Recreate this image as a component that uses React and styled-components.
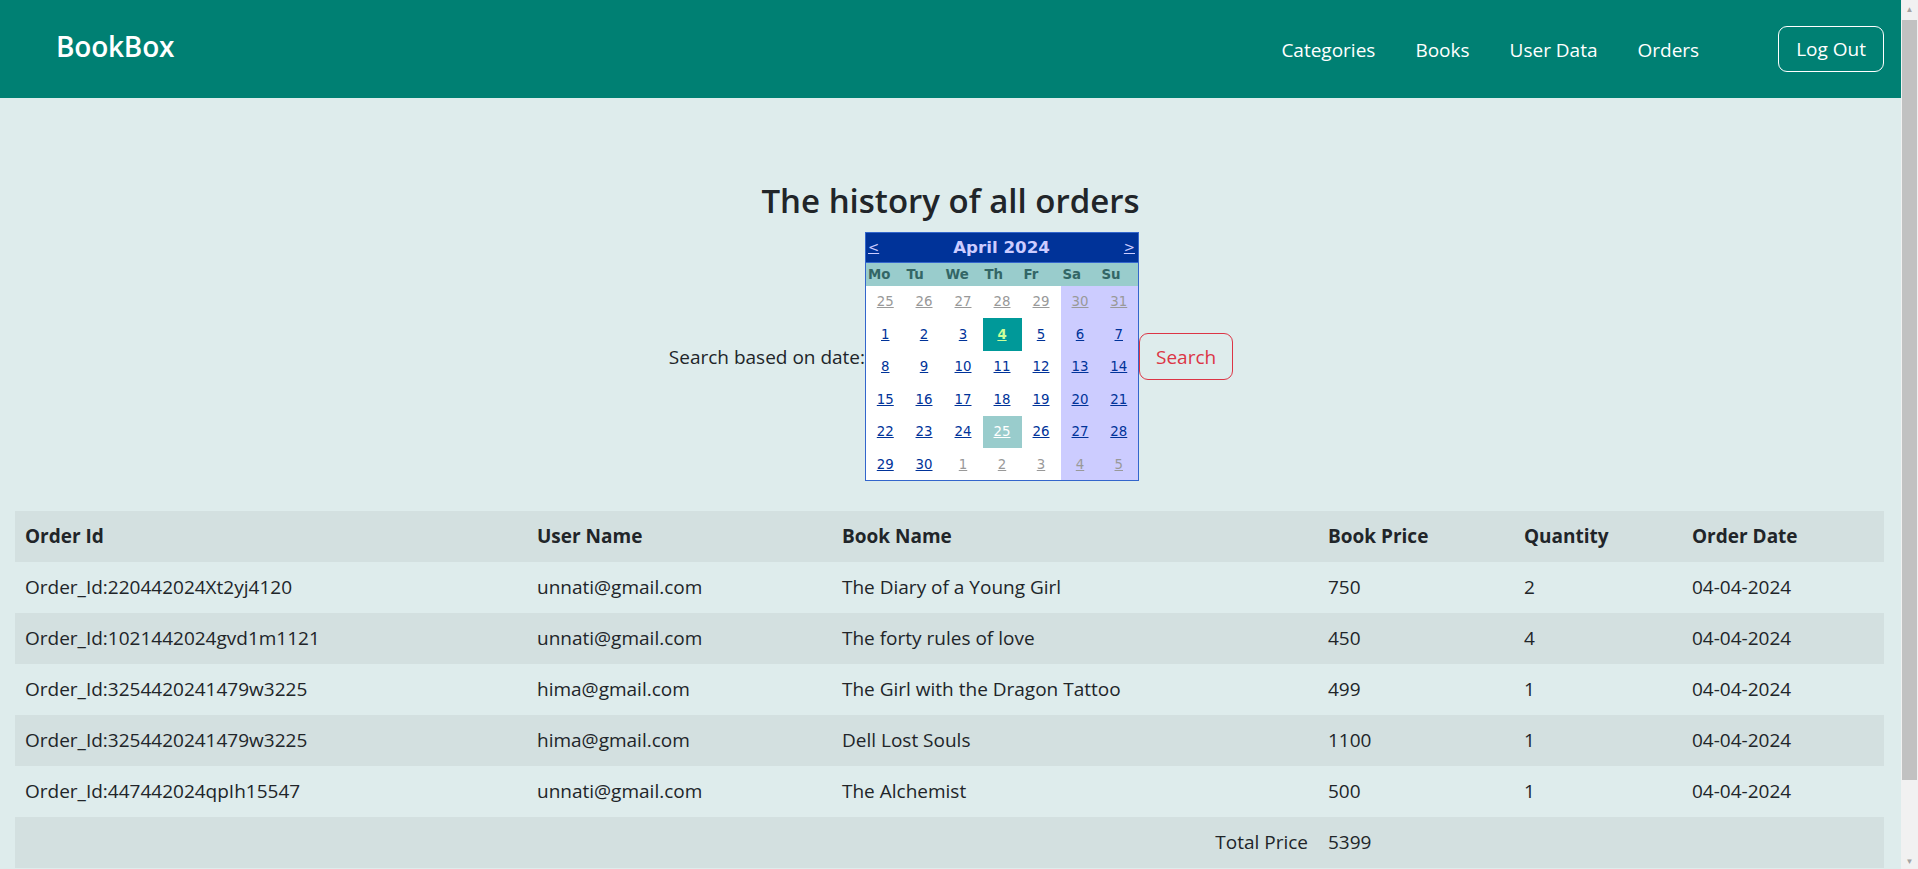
import React from "react";
import styled, { createGlobalStyle } from "styled-components";

const GlobalStyle = createGlobalStyle`
  html, body { margin: 0; padding: 0; }
  body {
    font-family: "Open Sans", "Noto Sans", sans-serif;
    background: #deecec;
    color: #212529;
  }
  * { box-sizing: border-box; }
`;

const Page = styled.div`
  margin-right: 17px;
`;

const ScrollTrack = styled.div`
  position: fixed;
  top: 0;
  right: 0;
  width: 17px;
  height: 100vh;
  background: #f1f1f1;
  display: flex;
  flex-direction: column;
  align-items: center;
`;

const ScrollArrow = styled.div`
  height: 17px;
  width: 17px;
  display: flex;
  align-items: center;
  justify-content: center;
  color: #a3a3a3;
  font-size: 8px;
  line-height: 1;
`;

const ScrollThumb = styled.div`
  width: 15px;
  height: 760px;
  margin-top: 3px;
  background: #c1c1c1;
`;

const ScrollSpacer = styled.div`
  flex: 1;
`;

const Navbar = styled.header`
  display: flex;
  align-items: center;
  height: 98px;
  background: #008073;
  padding: 0 17px 0 56px;
`;

const Brand = styled.a`
  font-size: 28px;
  font-weight: 600;
  color: #fff;
  text-decoration: none;
  margin-bottom: 6px;
  letter-spacing: -0.2px;
`;

const NavLinks = styled.nav`
  margin-left: auto;
  display: flex;
  align-items: center;
  gap: 40px;
  padding-top: 2px;
`;

const NavLink = styled.a`
  color: #fff;
  font-size: 19px;
  line-height: 30px;
  text-decoration: none;
  cursor: pointer;
`;

const OutlineButton = styled.button`
  font-family: inherit;
  font-size: 19px;
  line-height: 30px;
  background: transparent;
  border: 1px solid ${(p) => p.$color};
  color: ${(p) => p.$color};
  border-radius: 9px;
  height: ${(p) => p.$height}px;
  padding: 0 ${(p) => p.$padX}px;
  cursor: pointer;
`;

const LogOutButton = styled(OutlineButton)`
  margin-left: 79px;
`;

const Main = styled.main`
  padding: 82px 15px 79px 15px;
`;

const Title = styled.h3`
  margin: 0 0 10px;
  text-align: center;
  font-size: 33px;
  line-height: 42px;
  font-weight: 600;
`;

const SearchRow = styled.div`
  display: flex;
  justify-content: center;
  align-items: center;
  padding-left: 1px;
`;

const SearchLabel = styled.label`
  font-size: 19px;
  line-height: 30px;
`;

const CalTable = styled.table`
  border-collapse: collapse;
  table-layout: fixed;
  width: 274px;
  background: #fff;
  border: 1px solid #3366cc;
  font-family: "DejaVu Sans", Verdana, sans-serif;
  font-size: 13.33px;
  color: #003399;
`;

const CalTitleCell = styled.td`
  background: #003399;
  border: 1px solid #3366cc;
  height: 30px;
  padding: 0 3px 0 2px;
  color: #ccccff;
`;

const CalTitleBar = styled.div`
  display: flex;
  align-items: center;
  justify-content: space-between;
`;

const MonthLabel = styled.span`
  font-size: 16.67px;
  font-weight: bold;
`;

const CalArrow = styled.a`
  color: #ccccff;
  text-decoration: underline;
  font-size: 13.33px;
  cursor: pointer;
`;

const DayHeader = styled.th`
  background: #99cccc;
  color: #336666;
  font-weight: bold;
  text-align: left;
  height: 23px;
  padding: 0 2px;
  font-size: 13.33px;
`;

const DayCell = styled.td`
  text-align: center;
  height: 32.5px;
  padding: 0;
  background: ${(p) =>
    p.$selected ? "#009999" : p.$today ? "#99cccc" : p.$weekend ? "#ccccff" : "transparent"};
`;

const DayLink = styled.a`
  text-decoration: underline;
  cursor: pointer;
  font-weight: ${(p) => (p.$selected ? "bold" : "normal")};
  color: ${(p) =>
    p.$selected ? "#ccff99" : p.$today ? "#ffffff" : p.$other ? "#999999" : "#003399"};
`;

const OrdersTable = styled.table`
  margin-top: 30px;
  width: 1869px;
  border-collapse: collapse;
  table-layout: fixed;
  font-size: 19px;
`;

const Row = styled.tr`
  background: ${(p) => (p.$striped ? "#d3e0e0" : "transparent")};
`;

const HeadCell = styled.th`
  width: ${(p) => p.$w}px;
  text-align: left;
  font-weight: 700;
  padding: 10px;
  line-height: 31px;
`;

const Cell = styled.td`
  padding: 10px;
  line-height: 31px;
  text-align: ${(p) => (p.$right ? "right" : "left")};
  white-space: nowrap;
`;

const columns = [
  { label: "Order Id", w: 512 },
  { label: "User Name", w: 305 },
  { label: "Book Name", w: 486 },
  { label: "Book Price", w: 196 },
  { label: "Quantity", w: 168 },
  { label: "Order Date", w: 202 },
];

const orders = [
  ["Order_Id:220442024Xt2yj4120", "unnati@gmail.com", "The Diary of a Young Girl", "750", "2", "04-04-2024"],
  ["Order_Id:1021442024gvd1m1121", "unnati@gmail.com", "The forty rules of love", "450", "4", "04-04-2024"],
  ["Order_Id:3254420241479w3225", "hima@gmail.com", "The Girl with the Dragon Tattoo", "499", "1", "04-04-2024"],
  ["Order_Id:3254420241479w3225", "hima@gmail.com", "Dell Lost Souls", "1100", "1", "04-04-2024"],
  ["Order_Id:447442024qpIh15547", "unnati@gmail.com", "The Alchemist", "500", "1", "04-04-2024"],
];

const weekDays = ["Mo", "Tu", "We", "Th", "Fr", "Sa", "Su"];

const weeks = [
  [25, 26, 27, 28, 29, 30, 31].map((d) => ({ d, other: true })),
  [1, 2, 3, 4, 5, 6, 7].map((d) => ({ d })),
  [8, 9, 10, 11, 12, 13, 14].map((d) => ({ d })),
  [15, 16, 17, 18, 19, 20, 21].map((d) => ({ d })),
  [22, 23, 24, 25, 26, 27, 28].map((d) => ({ d })),
  [29, 30, 1, 2, 3, 4, 5].map((d, i) => ({ d, other: i >= 2 })),
];

function Calendar() {
  return (
    <CalTable>
      <tbody>
        <tr>
          <CalTitleCell colSpan={7}>
            <CalTitleBar>
              <CalArrow>&lt;</CalArrow>
              <MonthLabel>April 2024</MonthLabel>
              <CalArrow>&gt;</CalArrow>
            </CalTitleBar>
          </CalTitleCell>
        </tr>
        <tr>
          {weekDays.map((w) => (
            <DayHeader key={w}>{w}</DayHeader>
          ))}
        </tr>
        {weeks.map((week, wi) => (
          <tr key={wi}>
            {week.map((day, di) => {
              const selected = !day.other && day.d === 4;
              const today = !day.other && day.d === 25;
              return (
                <DayCell key={di} $weekend={di >= 5} $selected={selected} $today={today}>
                  <DayLink $other={day.other} $selected={selected} $today={today}>
                    {day.d}
                  </DayLink>
                </DayCell>
              );
            })}
          </tr>
        ))}
      </tbody>
    </CalTable>
  );
}

function Scrollbar() {
  return (
    <ScrollTrack>
      <ScrollArrow>▲</ScrollArrow>
      <ScrollThumb />
      <ScrollSpacer />
      <ScrollArrow>▼</ScrollArrow>
    </ScrollTrack>
  );
}

export default function App() {
  return (
    <>
      <GlobalStyle />
      <Page>
        <Navbar>
          <Brand>BookBox</Brand>
          <NavLinks>
            <NavLink>Categories</NavLink>
            <NavLink>Books</NavLink>
            <NavLink>User Data</NavLink>
            <NavLink>Orders</NavLink>
          </NavLinks>
          <LogOutButton $color="#ffffff" $height={46} $padX={17}>
            Log Out
          </LogOutButton>
        </Navbar>
        <Main>
          <Title>The history of all orders</Title>
          <SearchRow>
            <SearchLabel>Search based on date:</SearchLabel>
            <Calendar />
            <OutlineButton $color="#dc3545" $height={47} $padX={16}>
              Search
            </OutlineButton>
          </SearchRow>
          <OrdersTable>
            <tbody>
              <Row $striped>
                {columns.map((c) => (
                  <HeadCell key={c.label} $w={c.w}>
                    {c.label}
                  </HeadCell>
                ))}
              </Row>
              {orders.map((o, i) => (
                <Row key={i} $striped={i % 2 === 1}>
                  {o.map((v, j) => (
                    <Cell key={j}>{v}</Cell>
                  ))}
                </Row>
              ))}
              <Row $striped>
                <Cell colSpan={3} $right>
                  Total Price
                </Cell>
                <Cell>5399</Cell>
                <Cell />
                <Cell />
              </Row>
            </tbody>
          </OrdersTable>
        </Main>
      </Page>
      <Scrollbar />
    </>
  );
}
